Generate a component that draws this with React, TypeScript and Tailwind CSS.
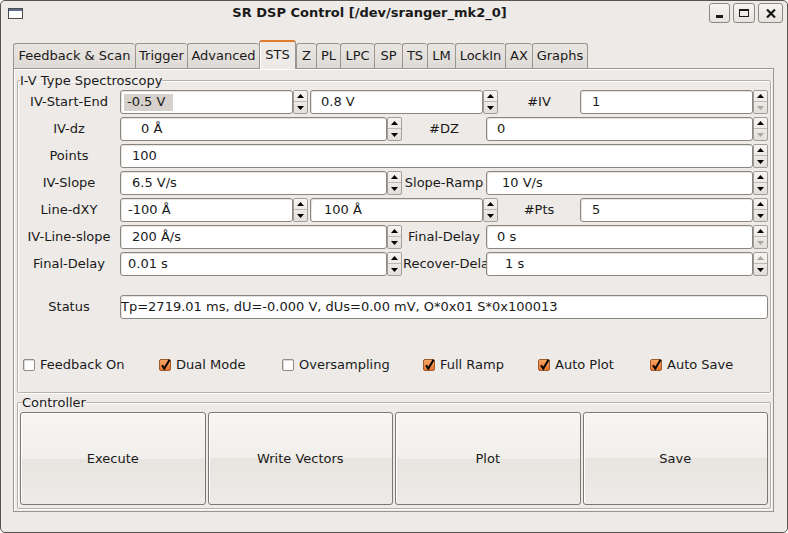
import React from 'react';

function Spin({ upDis, downDis }: { upDis?: boolean; downDis?: boolean }) {
  return (
    <div className="w-[15px] h-[24px] shrink-0 flex flex-col border border-[#a39e98] rounded-[2px] bg-gradient-to-b from-[#f6f4f2] to-[#e3dfdb]">
      <div className="h-[11px] flex items-center justify-center border-b border-[#bdb8b2]">
        <svg width="7" height="4" viewBox="0 0 7 4">
          <polygon points="0,4 3.5,0 7,4" className={upDis ? 'fill-[#aaa59f]' : 'fill-black'} />
        </svg>
      </div>
      <div className="flex-1 flex items-center justify-center">
        <svg width="7" height="4" viewBox="0 0 7 4">
          <polygon points="0,0 7,0 3.5,4" className={downDis ? 'fill-[#aaa59f]' : 'fill-black'} />
        </svg>
      </div>
    </div>
  );
}

function Entry({ w, pl, children, cls = '' }: { w: string; pl: string; children?: React.ReactNode; cls?: string }) {
  return (
    <div
      className={`${w} ${pl} ${cls} h-[24px] shrink-0 bg-white border border-[#8b8680] rounded-[3px] flex items-center whitespace-nowrap overflow-hidden shadow-[inset_1px_1px_0_#e6e3e0]`}
    >
      {children}
    </div>
  );
}

function Lbl({ children, w = 'w-[102px]', cls = 'justify-center' }: { children: React.ReactNode; w?: string; cls?: string }) {
  return <div className={`${w} ${cls} h-[24px] shrink-0 flex items-center whitespace-nowrap overflow-hidden`}>{children}</div>;
}

function Check({ checked, label, w }: { checked?: boolean; label: string; w: string }) {
  return (
    <div className={`${w} shrink-0 flex items-center gap-[5px]`}>
      {checked ? (
        <div className="w-[12px] h-[12px] relative rounded-[2px] border border-[#9c5c2a] bg-gradient-to-b from-[#f8a466] to-[#e7762a]">
          <svg width="12" height="12" viewBox="0 0 12 12" className="absolute left-[-1px] top-[-1px] overflow-visible">
            <path d="M3 6.2 L5.3 9.6 L10.6 0.8" stroke="#000" strokeWidth="2" fill="none" />
          </svg>
        </div>
      ) : (
        <div className="w-[12px] h-[12px] rounded-[2px] border border-[#8f8a84] bg-white shadow-[inset_1px_1px_0_#dcd8d4]" />
      )}
      <span className="whitespace-nowrap">{label}</span>
    </div>
  );
}

function Btn({ children }: { children: React.ReactNode }) {
  return (
    <div className="h-[93px] flex items-center justify-center border border-[#7d7872] rounded-[3px] bg-[linear-gradient(to_bottom,#f7f6f4_0%,#f1efec_50%,#e8e5e1_50%,#edebe7_100%)] shadow-[inset_1px_1px_0_#fff]">
      {children}
    </div>
  );
}

const tabs: { label: string; w: string; active?: boolean }[] = [
  { label: 'Feedback & Scan', w: 'w-[122px]' },
  { label: 'Trigger', w: 'w-[52px]' },
  { label: 'Advanced', w: 'w-[72px]' },
  { label: 'STS', w: 'w-[37px]', active: true },
  { label: 'Z', w: 'w-[20px]' },
  { label: 'PL', w: 'w-[24px]' },
  { label: 'LPC', w: 'w-[34px]' },
  { label: 'SP', w: 'w-[28px]' },
  { label: 'TS', w: 'w-[25px]' },
  { label: 'LM', w: 'w-[28px]' },
  { label: 'LockIn', w: 'w-[50px]' },
  { label: 'AX', w: 'w-[27px]' },
  { label: 'Graphs', w: 'w-[56px]' },
];

export default function App() {
  return (
    <div className="w-[788px] h-[533px] bg-white font-['DejaVu_Sans',sans-serif] text-[13px] text-[#1a1a1a]">
      <div className="w-[788px] h-[533px] border border-[#57534e] rounded-[5px] bg-[#edeae7] flex flex-col overflow-hidden">
        {/* Title bar */}
        <div className="h-[24px] shrink-0 flex items-center">
          <div className="w-[29px] pl-[7px] flex items-center">
            <svg width="15" height="11" viewBox="0 0 15 11">
              <rect x="0.5" y="0.5" width="14" height="10" fill="#fff" stroke="#4b4b4b" />
              <rect x="1" y="1" width="13" height="2" fill="#5a6f8f" />
            </svg>
          </div>
          <div className="flex-1 text-center font-bold text-[13px]">SR DSP Control [/dev/sranger_mk2_0]</div>
          <div className="flex gap-[3px] pr-[4px]">
            <div className="w-[21px] h-[20px] border border-[#8d8882] rounded-[3px] bg-gradient-to-b from-[#f7f6f4] to-[#e6e2de] flex items-end justify-center pb-[4px]">
              <div className="w-[7px] h-[3px] bg-[#1a1a1a]" />
            </div>
            <div className="w-[22px] h-[20px] border border-[#8d8882] rounded-[3px] bg-gradient-to-b from-[#f7f6f4] to-[#e6e2de] flex items-center justify-center">
              <div className="w-[10px] h-[8px] border border-[#1a1a1a] border-t-2" />
            </div>
            <div className="w-[25px] h-[20px] border border-[#8d8882] rounded-[3px] bg-gradient-to-b from-[#f7f6f4] to-[#e6e2de] flex items-center justify-center">
              <svg width="10" height="9" viewBox="0 0 10 9">
                <path d="M1 0.5 L9 8.5 M9 0.5 L1 8.5" stroke="#1a1a1a" strokeWidth="2.2" />
              </svg>
            </div>
          </div>
        </div>

        {/* Notebook */}
        <div className="ml-[12px] mt-[15px] w-[761px] flex flex-col">
          <div className="h-[28px] flex items-end">
            {tabs.map((t, i) =>
              t.active ? (
                <div
                  key={t.label}
                  className={`${t.w} h-[29px] mb-[-1px] relative z-10 bg-[#edeae7] border-l border-r border-[#9a958e] border-t-2 border-t-[#e07b2e] rounded-t-[3px] flex items-center justify-center pb-[2px] shadow-[inset_1px_0_0_#fff]`}
                >
                  {t.label}
                </div>
              ) : (
                <div
                  key={t.label}
                  className={`${t.w} ${i === tabs.length - 1 ? 'border-r' : ''} h-[25px] bg-gradient-to-b from-[#e9e6e2] to-[#dedad5] border-l border-t border-[#9a958e] rounded-t-[3px] flex items-center justify-center whitespace-nowrap`}
                >
                  {t.label}
                </div>
              )
            )}
          </div>

          {/* Panel */}
          <div className="h-[444px] border border-[#9a958e] shadow-[inset_1px_1px_0_#fff] pl-[3px] pr-[2px] pt-[4px] pb-[2px] flex flex-col">
            <fieldset className="w-[754px] border border-[#b6b1ab] rounded-[2px] shadow-[1px_1px_0_#fff,inset_1px_1px_0_#fff] pt-[2px] pb-[21px] m-0 px-0">
              <legend className="ml-[2px] leading-[15px] px-0">I-V Type Spectroscopy</legend>
              <div className="flex flex-col gap-[3px]">
                {/* Row 1 */}
                <div className="flex">
                  <Lbl>IV-Start-End</Lbl>
                  <Entry w="w-[173px]" pl="pl-[3px]">
                    <span className="bg-[#d6d1cc] h-[17px] w-[49px] pl-[3px] flex items-center">-0.5 V</span>
                  </Entry>
                  <Spin />
                  <Entry w="w-[173px]" pl="pl-[10px]" cls="ml-[2px]">0.8 V</Entry>
                  <Spin />
                  <Lbl w="w-[82px]">#IV</Lbl>
                  <Entry w="w-[173px]" pl="pl-[11px]">1</Entry>
                  <Spin downDis />
                </div>
                {/* Row 2 */}
                <div className="flex">
                  <Lbl>IV-dz</Lbl>
                  <Entry w="w-[267px]" pl="pl-[20px]">0 Å</Entry>
                  <Spin />
                  <Lbl w="w-[84px]">#DZ</Lbl>
                  <Entry w="w-[267px]" pl="pl-[10px]">0</Entry>
                  <Spin downDis />
                </div>
                {/* Row 3 */}
                <div className="flex">
                  <Lbl>Points</Lbl>
                  <Entry w="w-[633px]" pl="pl-[11px]">100</Entry>
                  <Spin />
                </div>
                {/* Row 4 */}
                <div className="flex">
                  <Lbl>IV-Slope</Lbl>
                  <Entry w="w-[267px]" pl="pl-[11px]">6.5 V/s</Entry>
                  <Spin />
                  <Lbl w="w-[84px]">Slope-Ramp</Lbl>
                  <Entry w="w-[267px]" pl="pl-[15px]">10 V/s</Entry>
                  <Spin />
                </div>
                {/* Row 5 */}
                <div className="flex">
                  <Lbl>Line-dXY</Lbl>
                  <Entry w="w-[173px]" pl="pl-[7px]">-100 Å</Entry>
                  <Spin />
                  <Entry w="w-[173px]" pl="pl-[13px]" cls="ml-[2px]">100 Å</Entry>
                  <Spin />
                  <Lbl w="w-[82px]">#Pts</Lbl>
                  <Entry w="w-[173px]" pl="pl-[11px]">5</Entry>
                  <Spin />
                </div>
                {/* Row 6 */}
                <div className="flex">
                  <Lbl>IV-Line-slope</Lbl>
                  <Entry w="w-[267px]" pl="pl-[11px]">200 Å/s</Entry>
                  <Spin />
                  <Lbl w="w-[84px]">Final-Delay</Lbl>
                  <Entry w="w-[267px]" pl="pl-[10px]">0 s</Entry>
                  <Spin downDis />
                </div>
                {/* Row 7 */}
                <div className="flex">
                  <Lbl>Final-Delay</Lbl>
                  <Entry w="w-[267px]" pl="pl-[7px]">0.01 s</Entry>
                  <Spin />
                  <Lbl w="w-[84px]" cls="justify-start pl-[1px]">Recover-Delay</Lbl>
                  <Entry w="w-[267px]" pl="pl-[18px]">1 s</Entry>
                  <Spin upDis />
                </div>
              </div>
              {/* Status */}
              <div className="flex mt-[19px]">
                <Lbl>Status</Lbl>
                <Entry w="w-[648px]" pl="pl-[0px]">Tp=2719.01 ms, dU=-0.000 V, dUs=0.00 mV, O*0x01 S*0x100013</Entry>
              </div>
              {/* Checkboxes */}
              <div className="flex mt-[40px] pl-[5px] h-[12px] items-center">
                <Check w="w-[136px]" label="Feedback On" />
                <Check w="w-[123px]" checked label="Dual Mode" />
                <Check w="w-[141px]" label="Oversampling" />
                <Check w="w-[115px]" checked label="Full Ramp" />
                <Check w="w-[112px]" checked label="Auto Plot" />
                <Check w="w-[100px]" checked label="Auto Save" />
              </div>
            </fieldset>

            <fieldset className="w-[754px] mt-[2px] border border-[#b6b1ab] rounded-[2px] shadow-[1px_1px_0_#fff,inset_1px_1px_0_#fff] pt-[2px] pb-[3px] pl-[2px] pr-[2px] m-0">
              <legend className="ml-[2px] leading-[15px] px-0">Controller</legend>
              <div className="grid grid-cols-4 gap-[2px]">
                <Btn>Execute</Btn>
                <Btn>Write Vectors</Btn>
                <Btn>Plot</Btn>
                <Btn>Save</Btn>
              </div>
            </fieldset>
          </div>
        </div>
      </div>
    </div>
  );
}
